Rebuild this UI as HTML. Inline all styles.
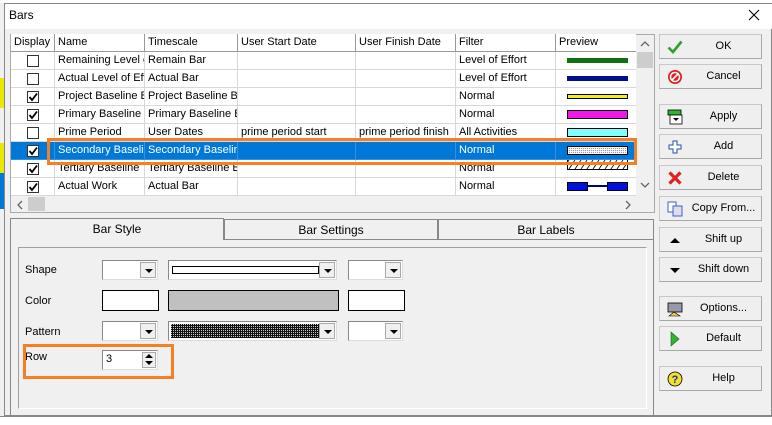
<!DOCTYPE html>
<html><head><style>
*{margin:0;padding:0;box-sizing:border-box}
body{width:772px;height:425px;position:relative;overflow:hidden;background:#f0f0f0;font-family:"Liberation Sans",Arial,sans-serif;font-size:11px;color:#000}
.a{position:absolute}
.cell{position:absolute;height:18px;line-height:17px;padding-left:3px;white-space:nowrap;overflow:hidden;border-right:1px solid #d8d8d8;border-bottom:1px solid #d8d8d8}
.hd{position:absolute;top:34px;height:18px;line-height:17px;padding-left:3px;background:#fff;border-right:1px solid #999;border-bottom:1px solid #999;white-space:nowrap}
.cb{position:absolute;width:12px;height:12px;border:1px solid #333;background:#fff;left:27px}
.btn{position:absolute;left:659px;width:103px;height:25px;background:#efefef;border:1px solid #c8c8c8;border-right-color:#a8a8a8;border-bottom-color:#a8a8a8;font-size:11px}
.btn span{position:absolute;left:26px;right:0;top:0;line-height:23px;text-align:center;white-space:nowrap}
.btn i{position:absolute;left:7px;top:4px;width:16px;height:16px;font-style:normal}
.combo{position:absolute;height:20px;background:#fff;border:1px solid #888;border-right-color:#ddd;border-bottom-color:#ddd}
.combo b{position:absolute;right:1px;top:1px;width:16px;height:16px;background:#f0f0f0;border:1px solid #aaa}
.combo b:after{content:"";position:absolute;left:4px;top:6px;border-left:4px solid transparent;border-right:4px solid transparent;border-top:4px solid #000}
.box{position:absolute;height:21px;border:1px solid #000;background:#fff}
.lbl{position:absolute;left:25px}
</style></head><body>
<div class="a" style="left:0;top:0;width:772px;height:3px;background:#fff"></div>
<div class="a" style="left:0;top:78px;width:5px;height:30px;background:#e8e800"></div>
<div class="a" style="left:0;top:143px;width:5px;height:30px;background:#e8e800"></div>
<div class="a" style="left:0;top:173px;width:5px;height:36px;background:#0078d7"></div>
<div class="a" style="left:0;top:416px;width:772px;height:9px;background:#fff;border-top:1px solid #888"></div>
<div class="a" style="left:4px;top:3px;width:768px;height:413px;background:#f0f0f0;border:1px solid #888"></div>
<div class="a" style="left:5px;top:4px;width:767px;height:25px;background:#fff"></div>
<div class="a" style="left:9px;top:8px;font-size:12px">Bars</div>
<svg class="a" style="left:748px;top:9px" width="12" height="12"><path d="M1 1L11 11M11 1L1 11" stroke="#000" stroke-width="1.1"/></svg>
<div class="a" style="left:10px;top:34px;width:645px;height:179px;background:#fff;border:1px solid #aaa"></div>
<div class="hd" style="left:11px;width:44px">Display</div>
<div class="hd" style="left:55px;width:90px">Name</div>
<div class="hd" style="left:145px;width:93px">Timescale</div>
<div class="hd" style="left:238px;width:118px">User Start Date</div>
<div class="hd" style="left:356px;width:100px">User Finish Date</div>
<div class="hd" style="left:456px;width:100px">Filter</div>
<div class="hd" style="left:556px;width:80px;border-right:none">Preview</div>
<div id="rows"></div>
<div class="a" style="left:636px;top:35px;width:18px;height:161px;background:#f0f0f0"></div>
<svg class="a" style="left:640px;top:40px" width="10" height="8"><path d="M1 6L5 2L9 6" fill="none" stroke="#666" stroke-width="1.3"/></svg>
<div class="a" style="left:637px;top:52px;width:16px;height:16px;background:#cdcdcd"></div>
<svg class="a" style="left:640px;top:181px" width="10" height="8"><path d="M1 2L5 6L9 2" fill="none" stroke="#666" stroke-width="1.3"/></svg>
<div class="a" style="left:11px;top:196px;width:643px;height:16px;background:#f0f0f0"></div>
<svg class="a" style="left:16px;top:200px" width="8" height="10"><path d="M6 1L2 5L6 9" fill="none" stroke="#666" stroke-width="1.3"/></svg>
<div class="a" style="left:28px;top:197px;width:17px;height:14px;background:#cdcdcd"></div>
<svg class="a" style="left:624px;top:200px" width="8" height="10"><path d="M2 1L6 5L2 9" fill="none" stroke="#666" stroke-width="1.3"/></svg>
<div class="a" style="left:47px;top:138px;width:590px;height:27px;border:3px solid #f57f25"></div>
<div class="a" style="left:10px;top:239px;width:644px;height:177px;border:1px solid #888;border-top:none;background:#f0f0f0"></div>
<div class="a" style="left:10px;top:218px;width:214px;height:22px;border:1px solid #888;border-bottom:none;background:#f0f0f0;text-align:center;line-height:21px;font-size:12px">Bar Style</div>
<div class="a" style="left:224px;top:219px;width:214px;height:21px;border:1px solid #888;background:#f0f0f0;text-align:center;line-height:20px;font-size:12px">Bar Settings</div>
<div class="a" style="left:438px;top:219px;width:216px;height:21px;border:1px solid #888;background:#f0f0f0;text-align:center;line-height:20px;font-size:12px">Bar Labels</div>
<div class="a" style="left:18px;top:247px;width:629px;height:162px;border:1px solid #a0a0a0;border-right-color:#fff;border-bottom-color:#fff"></div>
<div class="lbl" style="top:264px">Shape</div>
<div class="lbl" style="top:295px">Color</div>
<div class="lbl" style="top:326px">Pattern</div>
<div class="lbl" style="top:351px">Row</div>
<div class="combo" style="left:102px;top:260px;width:56px"><b></b></div>
<div class="combo" style="left:168px;top:260px;width:169px"><div class="a" style="left:3px;top:5px;width:147px;height:8px;border:1px solid #000"></div><b></b></div>
<div class="combo" style="left:348px;top:260px;width:55px"><b></b></div>
<div class="box" style="left:102px;top:290px;width:57px"></div>
<div class="box" style="left:168px;top:290px;width:171px;background:#c0c0c0"></div>
<div class="box" style="left:348px;top:290px;width:57px"></div>
<div class="combo" style="left:102px;top:321px;width:56px"><b></b></div>
<div class="combo" style="left:168px;top:321px;width:169px"><svg class="a" style="left:2px;top:2px" width="148" height="14"><defs><pattern id="pd" width="2" height="2" patternUnits="userSpaceOnUse"><rect width="2" height="2" fill="#111"/><rect width="1" height="1" fill="#ccc"/></pattern></defs><rect width="148" height="14" fill="url(#pd)"/></svg><b></b></div>
<div class="combo" style="left:348px;top:321px;width:55px"><b></b></div>
<div class="combo" style="left:102px;top:350px;width:56px;padding:2px 3px;font-size:11px">3
 <div class="a" style="right:1px;top:1px;width:14px;height:16px;background:#f0f0f0;border:1px solid #aaa">
  <div class="a" style="left:2px;top:1px;border-left:4px solid transparent;border-right:4px solid transparent;border-bottom:4px solid #000"></div>
  <div class="a" style="left:2px;top:8px;border-left:4px solid transparent;border-right:4px solid transparent;border-top:4px solid #000"></div>
 </div></div>
<div class="a" style="left:23px;top:344px;width:151px;height:35px;border:3px solid #f57f25"></div>
<div class="btn" style="top:34px"><i><svg width="16" height="16"><path d="M1.5 8.5L6 13L14.5 2.5" fill="none" stroke="#2ea02e" stroke-width="2.6"/></svg></i><span>OK</span></div>
<div class="btn" style="top:64px"><i><svg width="16" height="16"><circle cx="8" cy="8" r="7" fill="#e02020"/><circle cx="8" cy="8" r="4.5" fill="none" stroke="#fff" stroke-width="1.6"/><path d="M5 11L11 5" stroke="#fff" stroke-width="1.6"/></svg></i><span>Cancel</span></div>
<div class="btn" style="top:104px"><i><svg width="16" height="16"><rect x="1" y="1" width="13" height="5" fill="#2fb52f" stroke="#000" stroke-width=".8"/><rect x="3" y="6" width="12" height="9" fill="#fff" stroke="#000" stroke-width=".8"/><path d="M6 9h6l-3 3z" fill="#000"/></svg></i><span>Apply</span></div>
<div class="btn" style="top:134px"><i><svg width="16" height="16"><path d="M6 2h4v4h4v4h-4v4h-4v-4h-4v-4h4z" fill="#fff" stroke="#2050b0"/></svg></i><span>Add</span></div>
<div class="btn" style="top:165px"><i><svg width="16" height="16"><path d="M2.5 2.5L13.5 13.5M13.5 2.5L2.5 13.5" stroke="#e02020" stroke-width="3.2"/></svg></i><span>Delete</span></div>
<div class="btn" style="top:196px"><i><svg width="16" height="16"><rect x="1" y="1" width="8" height="10" fill="#fff" stroke="#4060c0"/><rect x="6" y="5" width="9" height="10" fill="#dde" stroke="#4060c0"/></svg></i><span>Copy From...</span></div>
<div class="btn" style="top:227px"><i><svg width="16" height="16"><path d="M3 11h10L8 6z" fill="#000"/></svg></i><span>Shift up</span></div>
<div class="btn" style="top:257px"><i><svg width="16" height="16"><path d="M3 6h10L8 11z" fill="#000"/></svg></i><span>Shift down</span></div>
<div class="btn" style="top:296px"><i><svg width="16" height="16"><rect x="1" y="2" width="14" height="9" fill="#99a" stroke="#000" stroke-width=".8"/><path d="M2 15l5-4 6 4z" fill="#e8d050" stroke="#000" stroke-width=".6"/></svg></i><span>Options...</span></div>
<div class="btn" style="top:326px"><i><svg width="16" height="16"><path d="M4 1l8 7-8 7z" fill="#2fb52f" stroke="#186018" stroke-width=".6"/></svg></i><span>Default</span></div>
<div class="btn" style="top:366px"><i><svg width="16" height="16"><circle cx="8" cy="8" r="7" fill="#f0e030" stroke="#000" stroke-width=".8"/><text x="8" y="12" font-size="11" font-weight="bold" text-anchor="middle" fill="#203090" font-family="Liberation Sans">?</text></svg></i><span>Help</span></div>
<script>
var rows=[[0,"Remaining Level of","Remain Bar","","","Level of Effort","g"],[0,"Actual Level of Effort","Actual Bar","","","Level of Effort","n"],[1,"Project Baseline Bar","Project Baseline Bar","","","Normal","y"],[1,"Primary Baseline","Primary Baseline Bar","","","Normal","m"],[0,"Prime Period","User Dates","prime period start","prime period finish","All Activities","c"],[1,"Secondary Baseline","Secondary Baseline","","","Normal","s"],[1,"Tertiary Baseline","Tertiary Baseline Bar","","","Normal","h"],[1,"Actual Work","Actual Bar","","","Normal","w"]];
var cols=[[11,44],[55,90],[145,93],[238,118],[356,100],[456,100],[556,80]];
var h="";
rows.forEach(function(r,i){var t=52+i*18,sel=i==5;
if(sel)h+='<div class="a" style="left:11px;top:'+t+'px;width:625px;height:18px;background:#0078d7"></div>';
var c=sel?'color:#fff;':'';
for(var j=1;j<6;j++){h+='<div class="cell" style="'+c+'left:'+cols[j][0]+'px;top:'+t+'px;width:'+cols[j][1]+'px;'+(sel?'border-color:#3a90d8;':'')+'">'+r[j]+'</div>';}
h+='<div class="cell" style="left:11px;top:'+t+'px;width:44px;'+(sel?'border-color:#3a90d8;':'')+'"></div>';
h+='<div class="cell" style="left:556px;top:'+t+'px;width:80px;border-right:none;'+(sel?'border-color:#3a90d8;':'')+'"></div>';
h+='<div class="cb" style="top:'+(t+3)+'px">'+(r[0]?'<svg width="10" height="10" style="position:absolute;left:0;top:0"><path d="M1.5 5l2.5 3 5-6.5" fill="none" stroke="#000" stroke-width="1.8"/></svg>':'')+'</div>';
var p=r[6],s="position:absolute;left:567px;width:61px;";
if(p=="g")h+='<div style="'+s+'top:'+(t+6)+'px;height:5px;background:#107010;"></div>';
if(p=="n")h+='<div style="'+s+'top:'+(t+6)+'px;height:5px;background:#00108a;"></div>';
if(p=="y")h+='<div style="'+s+'top:'+(t+6)+'px;height:5px;background:#f0f020;border:1px solid #000"></div>';
if(p=="m")h+='<div style="'+s+'top:'+(t+4)+'px;height:9px;background:#f018e8;border:1px solid #000"></div>';
if(p=="c")h+='<div style="'+s+'top:'+(t+4)+'px;height:9px;background:#80ffff;border:1px solid #000"></div>';
if(p=="s")h+='<svg style="'+s+'top:'+(t+4)+'px" width="61" height="9"><defs><pattern id="sp" width="2" height="2" patternUnits="userSpaceOnUse"><rect width="2" height="2" fill="#f4f4f4"/><rect width="1" height="1" fill="#999"/></pattern></defs><rect x=".5" y=".5" width="60" height="8" fill="url(#sp)" stroke="#000"/></svg>';
if(p=="h"){var d="";for(var k=-4;k<64;k+=6)d+="M"+k+" 9L"+(k+6)+" 0";h+='<svg style="'+s+'top:'+(t+0)+'px" width="61" height="10"><path d="'+d+'" stroke="#000" stroke-width=".8"/><path d="M.5 0V9.5H60.5V0" fill="none" stroke="#000"/></svg>';}
if(p=="w")h+='<div style="'+s+'top:'+(t+4)+'px;height:9px;"><div class="a" style="left:0;top:0;width:21px;height:9px;background:#0010e0;border:1px solid #000"></div><div class="a" style="left:21px;top:3px;width:19px;height:2px;background:#000080"></div><div class="a" style="left:40px;top:0;width:21px;height:9px;background:#0010e0;border:1px solid #000"></div></div>';
});
document.getElementById("rows").innerHTML=h;
</script>
</body></html>
